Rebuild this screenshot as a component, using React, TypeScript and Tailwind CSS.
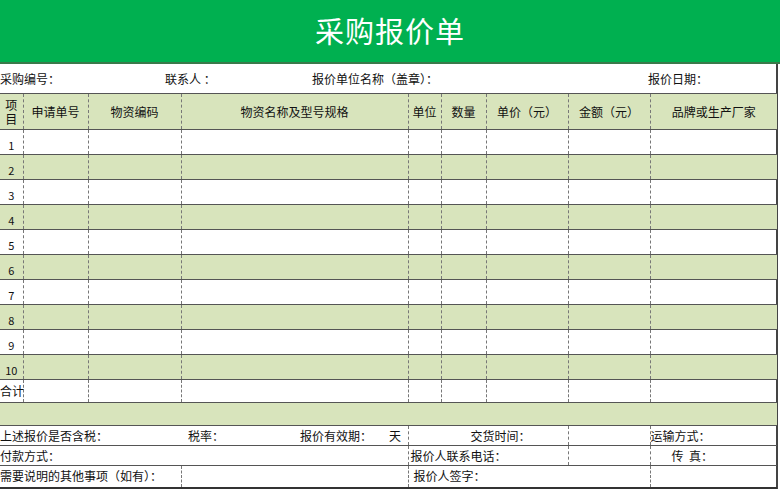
import React from "react";

const widths = [23, 65, 93, 227, 33, 45, 82, 82, 127];
const hl = "border-b border-[#555]";
const dv = "border-l border-dashed border-[#777]";

export default function App() {
  const rows = ["1","2","3","4","5","6","7","8","9","10"];
  return (
    <div className="w-[780px] h-[492px] bg-white overflow-hidden text-[12px] text-[#111]" style={{ fontFamily: '"Noto Sans CJK SC", sans-serif' }}>
      <div className="h-[64px] bg-[#00b050] flex items-center justify-center text-white text-[29px] tracking-[1px] border-b-2 border-[#3a7a4a]">采购报价单</div>
      <div className="w-[778px] border-r-2 border-[#444]">
        <table className="border-collapse table-fixed w-[777px]">
          <colgroup>{widths.map((w, i) => <col key={i} style={{ width: w }} />)}</colgroup>
          <tbody>
            <tr className={`h-[29px] ${hl}`}>
              <td colSpan={9} className="p-0">
                <div className="flex relative h-[29px] items-center">
                  <span className="absolute left-0">采购编号：</span>
                  <span className="absolute left-[165px]">联系人 ：</span>
                  <span className="absolute left-[312px]">报价单位名称（盖章）：</span>
                  <span className="absolute left-[648px]">报价日期：</span>
                </div>
              </td>
            </tr>
            <tr className={`h-[36px] bg-[#d8e4bc] ${hl}`}>
              <td className="text-center leading-[14px] p-0">项<br />目</td>
              {["申请单号","物资编码","物资名称及型号规格","单位","数量","单价（元）","金额（元）","品牌或生产厂家"].map((t) => (
                <td key={t} className={`${dv} text-center p-0 whitespace-nowrap`}>{t}</td>
              ))}
            </tr>
            {rows.map((r, i) => (
              <tr key={r} className={`h-[25px] ${hl} ${i % 2 ? "bg-[#d8e4bc]" : ""}`}>
                <td className="text-center p-0 pt-[6px] text-[11px]">{r}</td>
                {widths.slice(1).map((_, j) => <td key={j} className={`${dv} p-0`} />)}
              </tr>
            ))}
            <tr className={`h-[23px] ${hl}`}>
              <td className="p-0 whitespace-nowrap">合计</td>
              {widths.slice(1).map((_, j) => <td key={j} className={`${dv} p-0`} />)}
            </tr>
            <tr className={`h-[23px] bg-[#d8e4bc] ${hl}`}><td colSpan={9} /></tr>
            <tr className={`h-[20px] ${hl}`}>
              <td colSpan={4} className="p-0">
                <div className="relative h-[19px] flex items-center">
                  <span className="absolute left-0">上述报价是否含税：</span>
                  <span className="absolute left-[188px]">税率：</span>
                  <span className="absolute left-[300px]">报价有效期：</span>
                  <span className="absolute left-[389px]">天</span>
                </div>
              </td>
              <td colSpan={3} className={`${dv} p-0 pl-[62px] whitespace-nowrap`}>交货时间：</td>
              <td className={`${dv} p-0`} />
              <td className={`${dv} p-0`}>运输方式：</td>
            </tr>
            <tr className={`h-[20px] ${hl}`}>
              <td colSpan={4} className="p-0">付款方式：</td>
              <td colSpan={3} className={`${dv} p-0 pl-[2px] whitespace-nowrap`}>报价人联系电话：</td>
              <td className={`${dv} p-0`} />
              <td className={`${dv} p-0 pl-[21px]`}>传&nbsp;&nbsp;真：</td>
            </tr>
            <tr className="h-[22px] border-b-2 border-[#333]">
              <td colSpan={3} className="p-0 whitespace-nowrap">需要说明的其他事项（如有）：</td>
              <td className={`${dv} p-0`} />
              <td colSpan={4} className={`${dv} p-0 pl-[5px]`}>报价人签字：</td>
              <td className={`${dv} p-0`} />
            </tr>
          </tbody>
        </table>
      </div>
    </div>
  );
}
